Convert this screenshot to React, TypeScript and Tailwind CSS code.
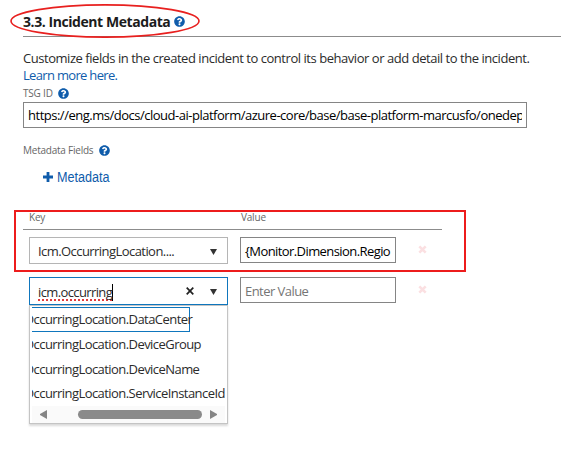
import { FaQuestionCircle } from "react-icons/fa";

const options = [
  "OccurringLocation.DataCenter",
  "OccurringLocation.DeviceGroup",
  "OccurringLocation.DeviceName",
  "OccurringLocation.ServiceInstanceId",
];

function Help() {
  return <FaQuestionCircle className="size-[11px] shrink-0 text-[#0f5cab]" />;
}

function Caret() {
  return (
    <svg className="h-[6px] w-[7px] shrink-0" viewBox="0 0 7 6">
      <path d="M0 0H7L3.5 6Z" fill="#333" />
    </svg>
  );
}

function Remove() {
  return (
    <svg className="mt-[8px] ml-[22px] size-[9px]" viewBox="0 0 9 9">
      <path d="M1.3 1.3 7.7 7.7M7.7 1.3 1.3 7.7" stroke="#fbe0e2" strokeWidth="2.6" />
    </svg>
  );
}

export default function App() {
  return (
    <div className="relative h-[457px] w-[561px] overflow-hidden bg-white pl-[23px] font-['Open_Sans','Noto_Sans',sans-serif] text-[13px] text-[#2b2b2b]">
      <div className="flex h-[37px] items-center border-b border-[#8c8c8c] pt-[7px]">
        <h2 className="w-[151px] text-[14px] leading-[18px] font-bold tracking-[-0.43px] whitespace-nowrap text-[#1c1c1c]">
          3.3. Incident Metadata
        </h2>
        <Help />
      </div>

      <p className="mt-[13px] leading-[17px] tracking-[-0.455px] whitespace-nowrap">
        Customize fields in the created incident to control its behavior or add detail to the incident.
        <br />
        <a className="tracking-[-0.68px] text-[#0f5cab]">Learn more here.</a>
      </p>

      <div className="flex h-[18px] items-center pt-[1px] text-[10px] text-[#666]">
        <span className="w-[35px] tracking-[-0.2px] whitespace-nowrap">TSG ID</span>
        <Help />
      </div>
      <div className="h-[26px] w-[504px] border border-[#858585] px-[4px] text-black">
        <div className="overflow-hidden leading-[24px] tracking-[-0.49px] whitespace-nowrap">
          https://eng.ms/docs/cloud-ai-platform/azure-core/base/base-platform-marcusfo/onedep
        </div>
      </div>

      <div className="mt-[14px] flex h-[16px] items-center text-[10px] text-[#666]">
        <span className="w-[76px] tracking-[-0.23px] whitespace-nowrap">Metadata Fields</span>
        <Help />
      </div>

      <div className="mt-[11px] ml-[20px] flex h-[16px] items-center gap-[4px] font-['Liberation_Sans',Arial,sans-serif] text-[14px] leading-[16px] text-[#0f5cab]">
        <svg className="size-[10px]" viewBox="0 0 10 10">
          <path d="M5 0V10M0 5H10" stroke="currentColor" strokeWidth="2.8" />
        </svg>
        <span className="origin-left scale-x-[0.9]">Metadata</span>
      </div>

      <div className="mt-[24px] flex h-[21px] w-[419px] border-b border-[#8c8c8c] pl-[6px] text-[10px] leading-[16px] tracking-[-0.2px] text-[#666]">
        <span className="w-[212px]">Key</span>
        <span>Value</span>
      </div>

      <div className="mt-[7px] flex pl-[6px]">
        <div className="mr-[12px] flex h-[27px] w-[199px] items-center border border-[#b5b5b5] pt-[2px] pr-[10px] pl-[8px]">
          <span className="flex-1 tracking-[-0.56px]">Icm.OccurringLocation....</span>
          <Caret />
        </div>
        <div className="h-[26px] w-[156px] border border-[#858585] px-[4px] text-black">
          <div className="leading-[26px] tracking-[-0.58px] whitespace-nowrap">
            {"{Monitor.Dimension.Regio"}
          </div>
        </div>
        <Remove />
      </div>

      <div className="mt-[13px] flex h-[28px] pl-[6px]">
        <div className="mr-[12px] flex h-[28px] w-[199px] items-center border border-[#0f76bd] pt-[2px] pr-[10px] pl-[8px]">
          <span className="border-r border-black leading-[17px] tracking-[-0.62px] underline decoration-[#e03c3c] decoration-dotted decoration-[1.5px] underline-offset-[3px] [text-decoration-skip-ink:none]">
            icm.occurring
          </span>
          <svg className="mr-[16px] mb-[3px] ml-auto size-[8px]" viewBox="0 0 8 8">
            <path d="M.7.7 7.3 7.3M7.3.7.7 7.3" stroke="#222" strokeWidth="1.7" />
          </svg>
          <Caret />
        </div>
        <div className="h-[26px] w-[156px] border border-[#858585] px-[4px] leading-[27px] tracking-[-0.55px] text-[#757575]">
          Enter Value
        </div>
        <Remove />
      </div>

      <div className="ml-[6px] h-[119px] w-[199px] border border-[#c4c4c4] px-[2px] pt-[1px] shadow-[0_2px_2px_rgba(0,0,0,0.15)]">
        <div className="h-[99px] overflow-hidden">
          {options.map((label, i) => (
            <div
              key={label}
              className={
                i === 0
                  ? "h-[25px] w-[158px] border border-l-0 border-[#0f76bd] leading-[23px] whitespace-nowrap"
                  : "h-[24.5px] leading-[25px] whitespace-nowrap"
              }
            >
              <span className="-ml-[8px] inline-block tracking-[-0.56px]">{label}</span>
            </div>
          ))}
        </div>
        <div className="flex h-[17px] items-center bg-[#fafafa] pl-[8px]">
          <svg className="h-[9px] w-[7px]" viewBox="0 0 7 9">
            <path d="M7 0V9L0 5V4Z" fill="#858585" />
          </svg>
          <div className="mr-[8px] ml-[31px] h-[9px] w-[124px] rounded-full bg-[#8a8a8a]" />
          <svg className="h-[9px] w-[7px]" viewBox="0 0 7 9">
            <path d="M0 0V9L7 5V4Z" fill="#858585" />
          </svg>
        </div>
      </div>

      <div className="pointer-events-none absolute top-[210px] left-[14px] h-[62px] w-[452px] border-2 border-[#ed1c1c]" />
      <svg className="pointer-events-none absolute top-[4px] left-[10px] h-[34px] w-[190px]" viewBox="0 0 190 34">
        <ellipse cx="95" cy="17" rx="94" ry="16.1" fill="none" stroke="#e8201f" strokeWidth="1.6" />
      </svg>
    </div>
  );
}
